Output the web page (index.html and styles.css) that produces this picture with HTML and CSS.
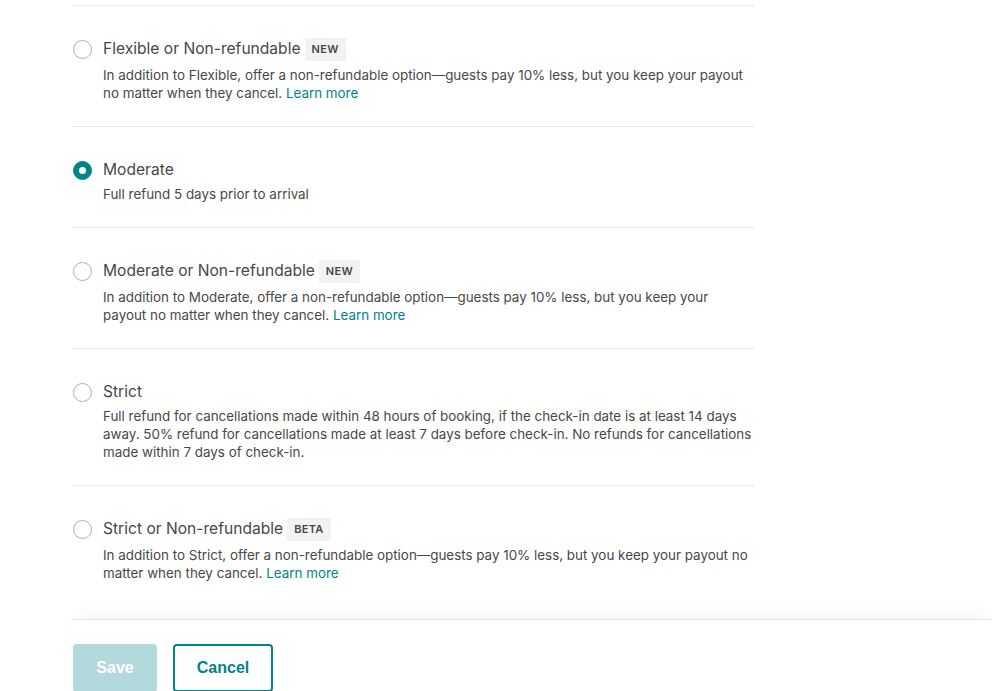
FILE: index.html
```html
<!DOCTYPE html>
<html>
<head>
<meta charset="utf-8">
<link rel="stylesheet" href="styles.css">
</head>
<body>
<div class="page">
  <div class="list">
    <div class="option">
      <div class="row">
        <span class="radio"></span>
        <span class="title">Flexible or Non-refundable</span>
        <span class="badge">NEW</span>
      </div>
      <p class="desc">In addition to Flexible, offer a non-refundable option—guests pay 10% less, but you keep your payout no matter when they cancel. <a class="link">Learn more</a></p>
    </div>
    <div class="option">
      <div class="row plain">
        <span class="radio checked"></span>
        <span class="title">Moderate</span>
      </div>
      <p class="desc">Full refund 5 days prior to arrival</p>
    </div>
    <div class="option">
      <div class="row">
        <span class="radio"></span>
        <span class="title">Moderate or Non-refundable</span>
        <span class="badge">NEW</span>
      </div>
      <p class="desc">In addition to Moderate, offer a non-refundable option—guests pay 10% less, but you keep your payout no matter when they cancel. <a class="link">Learn more</a></p>
    </div>
    <div class="option">
      <div class="row plain">
        <span class="radio"></span>
        <span class="title">Strict</span>
      </div>
      <p class="desc">Full refund for cancellations made within 48 hours of booking, if the check-in date is at least 14 days away. 50% refund for cancellations made at least 7 days before check-in. No refunds for cancellations made within 7 days of check-in.</p>
    </div>
    <div class="option last">
      <div class="row">
        <span class="radio"></span>
        <span class="title">Strict or Non-refundable</span>
        <span class="badge">BETA</span>
      </div>
      <p class="desc">In addition to Strict, offer a non-refundable option—guests pay 10% less, but you keep your payout no matter when they cancel. <a class="link">Learn more</a></p>
    </div>
  </div>
  <div class="footer">
    <button class="btn save">Save</button>
    <button class="btn cancel">Cancel</button>
  </div>
</div>
</body>
</html>
```

FILE: styles.css
```css
html, body {
  margin: 0;
  padding: 0;
  background: #fff;
}
body {
  font-family: Inter, "Noto Sans", sans-serif;
  color: #484848;
  overflow: hidden;
}
.page {
  padding-top: 5px;
  padding-left: 72px;
}
.list {
  width: 683px;
  border-top: 1px solid #ebebeb;
}
.option {
  padding: 31px 0 24px 0;
  border-bottom: 1px solid #ebebeb;
}
.option.last {
  border-bottom: none;
  padding-bottom: 37px;
}
.row {
  display: flex;
  align-items: center;
  height: 24px;
}
.row.plain {
  height: 22px;
  padding-top: 1px;
  margin-bottom: -1px;
}
.radio {
  box-sizing: border-box;
  width: 19px;
  height: 19px;
  border: 1px solid #b0b0b0;
  border-radius: 50%;
  margin-left: 1px;
  margin-right: 11px;
  flex: none;
  background: #fff;
  display: flex;
  align-items: center;
  justify-content: center;
}
.radio.checked {
  background: #008489;
  border-color: #008489;
}
.radio.checked::after {
  content: "";
  width: 7px;
  height: 7px;
  border-radius: 50%;
  background: #fff;
}
.title {
  font-size: 15.6px;
  line-height: 22px;
  color: #484848;
}
.badge {
  margin-left: 4px;
  background: #f2f2f2;
  font-size: 11px;
  font-weight: 600;
  letter-spacing: 0.3px;
  line-height: 23px;
  height: 23px;
  padding: 0 7px;
  color: #484848;
}
.desc {
  margin: 5px 0 0 31px;
  font-size: 13.4px;
  line-height: 18px;
  color: #484848;
}
.link {
  color: #008489;
}
.footer {
  border-top: 1px solid #e4e4e4;
  box-shadow: 0 -12px 14px -6px rgba(0,0,0,0.04);
  padding: 24px 0 0 1px;
  display: flex;
  gap: 16px;
  position: relative;
}
.btn {
  font-family: "Liberation Sans", Arial, sans-serif;
  font-weight: 700;
  font-size: 16px;
  height: 48px;
  border-radius: 4px;
  box-sizing: border-box;
  cursor: pointer;
}
.save {
  width: 84px;
  background: #b2dadc;
  color: #fff;
  border: none;
}
.cancel {
  width: 100px;
  background: #fff;
  color: #008489;
  border: 2px solid #008489;
}
```
